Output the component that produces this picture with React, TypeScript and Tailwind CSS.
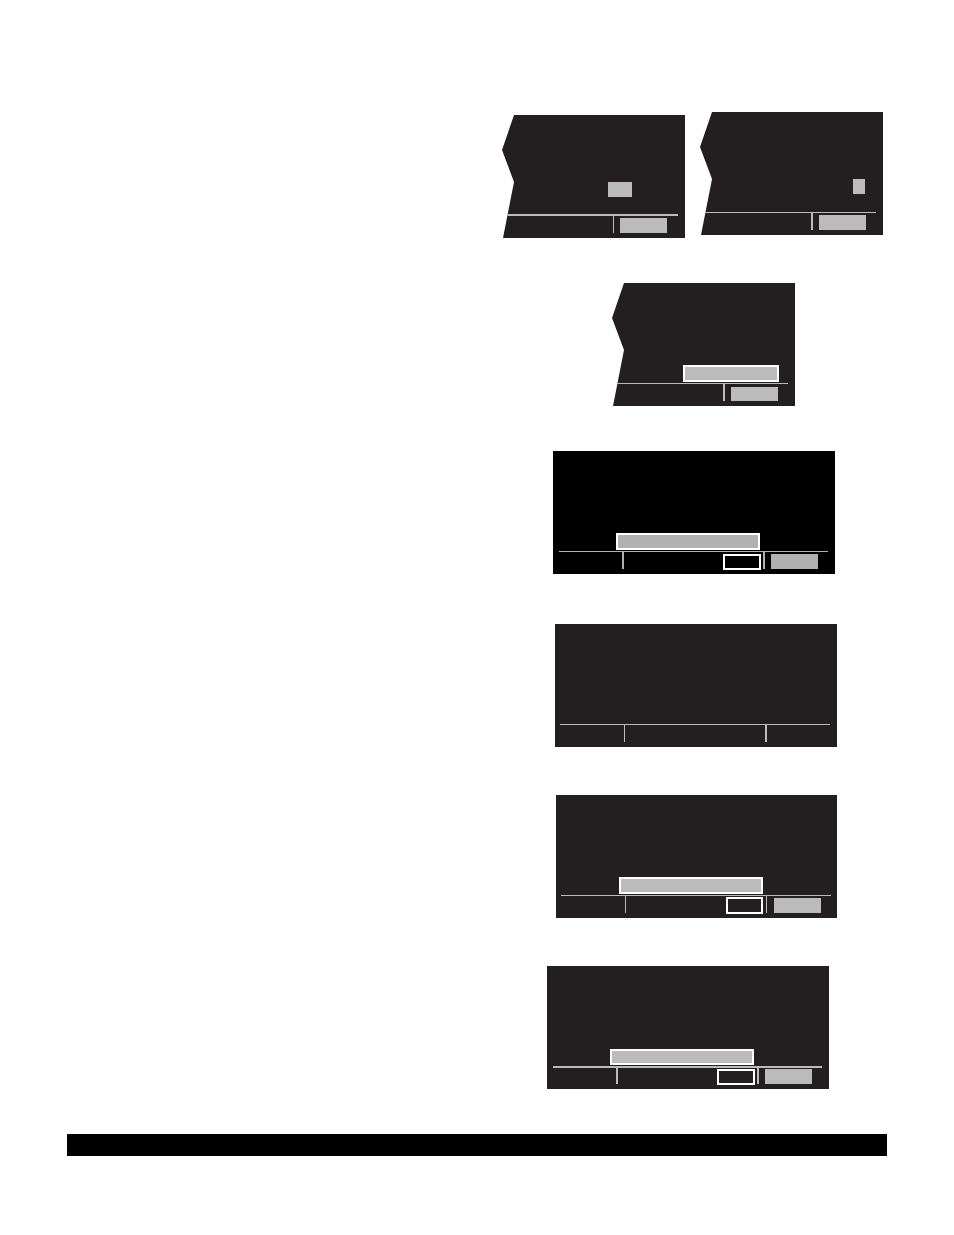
import React from 'react';
import clsx from 'clsx';

interface ScreenProps {
  label: string;
  className: string;
  // Height of the area above the soft key bar
  displayClass?: string;
  highlightClass?: string;
  ruleClass: string;
  // Soft key cells, split by the vertical dividers
  leftClass?: string;
  middleClass: string;
  rightClass: string;
  valueClass?: string;
  keyClass?: string;
}

function Screen({
  label,
  className,
  displayClass = 'h-[100px] pb-px',
  highlightClass,
  ruleClass,
  leftClass,
  middleClass,
  rightClass,
  valueClass,
  keyClass,
}: ScreenProps) {
  return (
    <figure aria-label={label} className={clsx('flex h-[123px] flex-col', className)}>
      <div className={clsx('flex shrink-0 items-end', displayClass)}>
        {highlightClass && <div className={highlightClass} />}
      </div>
      <div className={clsx('shrink-0', ruleClass)} />
      <div className="flex items-start">
        {leftClass && <div className={leftClass} />}
        <div className={clsx('flex items-start justify-end', middleClass)}>
          {valueClass && <div className={clsx('shrink-0 border-2 border-white', valueClass)} />}
        </div>
        <div className={clsx('flex items-start', rightClass)}>
          {keyClass && <div className={clsx('w-[47px] shrink-0', keyClass)} />}
        </div>
      </div>
    </figure>
  );
}

// Screens with a torn left edge
const TORN =
  'w-[183px] bg-[#231f20] [clip-path:polygon(12px_0,100%_0,100%_100%,1px_100%,12px_67px,0_35px)]';

export default function App() {
  return (
    <main className="flex flex-col bg-white px-[67px] pt-28 pb-[79px]">
      <div className="mr-1 flex items-end justify-end gap-[15px]">
        <div className="pt-[3px]">
          <Screen
            label="Two digit field selected"
            className={TORN}
            displayClass="h-[99px] pb-[17px]"
            highlightClass="ml-[106px] h-[15px] w-6 bg-[#bbbbbb]"
            ruleClass="mr-[7px] h-0.5 bg-[#bbbbbb]"
            middleClass="w-[111px]"
            rightClass="h-[17px] border-l border-[#bbbbbb] pl-1.5"
            keyClass="mt-0.5 h-[15px] bg-[#bbbbbb]"
          />
        </div>
        <div className="self-start">
          <Screen
            label="Single digit field selected"
            className={TORN}
            displayClass="h-[100px] pb-[18px]"
            highlightClass="ml-[153px] h-[15px] w-3 bg-[#bbbbbb]"
            ruleClass="mr-[7px] h-px bg-[#bbbbbb]"
            middleClass="w-[111px]"
            rightClass="h-[17px] border-l-2 border-[#bbbbbb] pl-1.5"
            keyClass="mt-0.5 h-[15px] bg-[#bbbbbb]"
          />
        </div>
      </div>

      <div className="mt-[45px] mr-[92px] flex justify-end">
        <Screen
          label="Message highlighted"
          className={TORN}
          highlightClass="ml-[71px] h-[17px] w-24 border-2 border-white bg-[#bbbbbb]"
          ruleClass="mr-[7px] h-px bg-[#bbbbbb]"
          middleClass="w-[111px]"
          rightClass="h-[17px] border-l-2 border-[#bbbbbb] pl-1.5"
          keyClass="mt-[3px] h-[14px] bg-[#bbbbbb]"
        />
      </div>

      <div className="mt-[45px] mr-[52px] flex justify-end">
        <Screen
          label="Message and value highlighted"
          className="w-[282px] bg-black"
          highlightClass="ml-[63px] h-[17px] w-36 border-2 border-white bg-[#b1b1b1]"
          ruleClass="mr-[7px] ml-1.5 h-px bg-[#b1b1b1]"
          leftClass="w-[69px]"
          middleClass="h-[17px] w-[141px] border-l-2 border-[#b1b1b1] pr-0.5"
          rightClass="h-[17px] border-l-2 border-[#b1b1b1] pl-1.5"
          valueClass="mt-0.5 h-4 w-[38px]"
          keyClass="mt-0.5 h-[15px] bg-[#b1b1b1]"
        />
      </div>

      <div className="mt-[50px] mr-[50px] flex justify-end">
        <Screen
          label="Blank display"
          className="w-[282px] bg-[#231f20]"
          ruleClass="mr-[7px] ml-[5px] h-px bg-[#bbbbbb]"
          leftClass="w-[69px]"
          middleClass="h-[17px] w-[141px] border-l border-[#bbbbbb]"
          rightClass="h-[17px] border-l-2 border-[#bbbbbb]"
        />
      </div>

      <div className="mt-12 mr-[50px] flex justify-end">
        <Screen
          label="Message and value highlighted"
          className="w-[281px] bg-[#231f20]"
          highlightClass="ml-[63px] h-[17px] w-36 border-2 border-white bg-[#bbbbbb]"
          ruleClass="mr-1.5 ml-[5px] h-px bg-[#bbbbbb]"
          leftClass="w-[69px]"
          middleClass="h-[17px] w-[141px] border-l border-[#bbbbbb] pr-[3px]"
          rightClass="h-[17px] border-l border-[#bbbbbb] pl-[7px]"
          valueClass="mt-px h-[17px] w-[37px]"
          keyClass="mt-0.5 h-[15px] bg-[#bbbbbb]"
        />
      </div>

      <div className="mt-12 mr-[58px] flex justify-end">
        <Screen
          label="Message and value highlighted"
          className="w-[282px] bg-[#231f20]"
          highlightClass="ml-[63px] h-4 w-36 border-2 border-white bg-[#bbbbbb]"
          ruleClass="mr-[7px] ml-1.5 h-0.5 bg-[#bbbbbb]"
          leftClass="w-[69px]"
          middleClass="h-4 w-[141px] border-l-2 border-[#bbbbbb] pr-0.5"
          rightClass="h-4 border-l-2 border-[#bbbbbb] pl-1.5"
          valueClass="mt-px h-4 w-[38px]"
          keyClass="mt-px h-[15px] bg-[#bbbbbb]"
        />
      </div>

      <footer className="mt-[45px] h-[22px] bg-black" />
    </main>
  );
}
